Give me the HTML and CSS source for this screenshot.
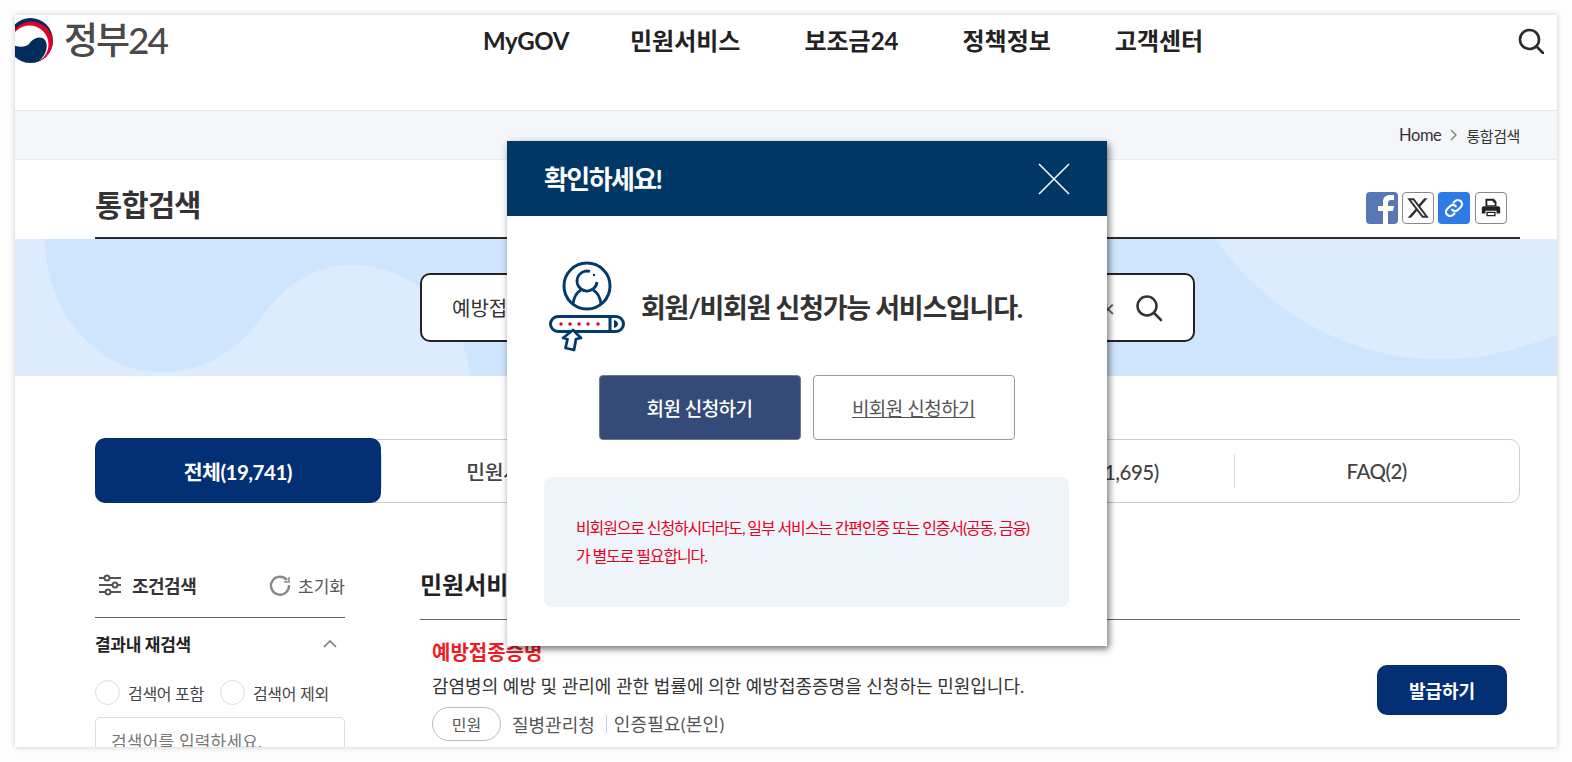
FILE: index.html
```html
<!DOCTYPE html>
<html lang="ko">
<head>
    <meta charset="UTF-8">
    <meta name="viewport" content="width=device-width, initial-scale=1.0">
    <title>정부24 - 통합검색</title>
    <link rel="stylesheet" href="styles.css">
</head>
<body>
    <div class="page">
        <header class="top">
            <a href="#" class="logo">
                <svg class="logo-mark" viewBox="15 18 41 46" width="41" height="46">
                    <defs>
                        <clipPath id="taegeuk"><circle cx="30.5" cy="40.5" r="22.5"/></clipPath>
                    </defs>
                    <g clip-path="url(#taegeuk)">
                        <rect x="8" y="18" width="46" height="46" fill="#002d5b"/>
                        <circle cx="31.5" cy="43" r="21.5" fill="#e2002d"/>
                        <circle cx="29.5" cy="44.5" r="19" fill="#fff"/>
                        <path d="M8 42C16 48 25 48 29 44C33 38 41 35 45 40C49 46 46 56 37 63L30 65L8 65Z" fill="#002d5b"/>
                    </g>
                </svg>
                <span class="logo-text">정부24</span>
            </a>
            <nav class="gnb">
                <a href="#">MyGOV</a>
                <a href="#">민원서비스</a>
                <a href="#">보조금24</a>
                <a href="#">정책정보</a>
                <a href="#">고객센터</a>
            </nav>
            <svg class="top-search" viewBox="0 0 26 26" width="26" height="26" fill="none" stroke="#2b2b2b" stroke-width="2.6">
                <circle cx="11.5" cy="11.5" r="9.5"/>
                <path d="M18.5 18.5L25 25" stroke-linecap="round"/>
            </svg>
        </header>

        <div class="crumb">
            <span class="crumb-home">Home</span>
            <svg viewBox="0 0 7 12" width="7" height="12" fill="none" stroke="#777" stroke-width="1.3"><path d="M1 1l5 5-5 5"/></svg>
            <span>통합검색</span>
        </div>

        <div class="inner title-row">
            <h1>통합검색</h1>
            <div class="share">
                <a href="#" class="share-btn share-fb">
                    <svg viewBox="0 0 32 32" width="32" height="32"><path d="M17 32V19h-5v-5h5v-4c0-5 3-7 7-7h4v5h-3c-2 0-3 1-3 3v3h6l-1 5h-5v13z" fill="#fff"/></svg>
                </a>
                <a href="#" class="share-btn share-line">
                    <svg viewBox="0 0 24 24" width="24" height="24"><path d="M18.244 2.25h3.308l-7.227 8.26 8.502 11.24H16.17l-5.214-6.817L4.99 21.75H1.68l7.73-8.835L1.254 2.25H8.08l4.713 6.231zm-1.161 17.52h1.833L7.084 4.126H5.117z" fill="#333"/></svg>
                </a>
                <a href="#" class="share-btn share-link">
                    <svg viewBox="0 0 24 24" width="22" height="22" fill="none" stroke="#fff" stroke-width="2.4" stroke-linecap="round">
                        <path d="M10 14a4.5 4.5 0 0 0 6.4 0l3-3A4.5 4.5 0 0 0 13 4.600l-1.500 1.500"/>
                        <path d="M14 10a4.500 4.500 0 0 0-6.400 0l-3 3A4.500 4.500 0 0 0 11 19.400l1.500-1.500"/>
                    </svg>
                </a>
                <a href="#" class="share-btn share-line share-print">
                    <svg viewBox="0 0 24 24" width="22" height="22"><path d="M6 2h9l3 3v5H6zM8 4v5h8V6h-2V4z" fill="#222"/><path d="M4 10h16a2 2 0 0 1 2 2v6h-4v-3H6v3H2v-6a2 2 0 0 1 2-2z" fill="#222"/><path d="M7 16h10v5H7z" fill="#222"/><path d="M8.500 17.500h7v2h-7z" fill="#fff"/></svg>
                </a>
            </div>
        </div>

        <section class="search-band">
            <svg class="band-bg" viewBox="0 0 1542 137" preserveAspectRatio="none">
                <path d="M30 0C30 70 80 133 145 133C190 133 225 110 245 80C270 45 300 26 335 26C400 26 450 75 455 137L1542 137L1542 96C1490 115 1460 120 1425 120C1330 120 1250 70 1200 0Z" fill="#cfe5fd"/>
            </svg>
            <div class="search-box">
                <span class="search-word">예방접종증명</span>
                <span class="search-clear">×</span>
                <svg viewBox="0 0 28 28" width="28" height="28" fill="none" stroke="#333" stroke-width="2.500">
                    <circle cx="12" cy="12" r="9.500"/>
                    <path d="M19 19l7 7" stroke-linecap="round"/>
                </svg>
            </div>
        </section>

        <div class="inner">
            <div class="tabs">
                <a href="#" class="tab active">전체(19,741)</a>
                <a href="#" class="tab">민원서비스(5)</a>
                <a href="#" class="tab">보조금(18,008)</a>
                <a href="#" class="tab">정책정보(1,695)</a>
                <a href="#" class="tab">FAQ(2)</a>
            </div>

            <div class="result-wrap">
                <aside class="filter">
                    <div class="filter-head">
                        <div class="filter-title">
                            <svg viewBox="0 0 24 22" width="24" height="22" fill="none" stroke="#555" stroke-width="2">
                                <path d="M1 4h22M1 11h22M1 18h22"/>
                                <circle cx="9" cy="4" r="2.500" fill="#fff"/>
                                <circle cx="17" cy="11" r="2.500" fill="#fff"/>
                                <circle cx="10" cy="18" r="2.500" fill="#fff"/>
                            </svg>
                            <strong>조건검색</strong>
                        </div>
                        <a href="#" class="reset">
                            <svg viewBox="0 0 22 22" width="22" height="22" fill="none" stroke="#888" stroke-width="2.400">
                                <path d="M18 6A9 9 0 1 0 20 11"/>
                                <path d="M20 3v5h-5" stroke-width="1.500"/>
                            </svg>
                            초기화
                        </a>
                    </div>
                    <div class="filter-sub">
                        <strong>결과내 재검색</strong>
                        <svg viewBox="0 0 14 8" width="14" height="8" fill="none" stroke="#777" stroke-width="1.500"><path d="M1 7l6-6 6 6"/></svg>
                    </div>
                    <div class="radios">
                        <label class="radio"><i></i>검색어 포함</label>
                        <label class="radio"><i></i>검색어 제외</label>
                    </div>
                    <div class="filter-input">검색어를 입력하세요.</div>
                </aside>

                <main class="results">
                    <h2>민원서비스</h2>
                    <div class="result-item">
                        <div class="result-text">
                            <a href="#" class="result-name">예방접종증명</a>
                            <p>감염병의 예방 및 관리에 관한 법률에 의한 예방접종증명을 신청하는 민원입니다.</p>
                            <div class="result-meta">
                                <span class="pill">민원</span>
                                <span>질병관리청</span>
                                <span class="meta-sep">인증필요(본인)</span>
                            </div>
                        </div>
                        <a href="#" class="btn-issue">발급하기</a>
                    </div>
                </main>
            </div>
        </div>

        <div class="modal">
            <div class="modal-head">
                <strong>확인하세요!</strong>
                <svg viewBox="0 0 32 32" width="32" height="32" fill="none" stroke="#fff" stroke-width="1.500"><path d="M1 1l30 30M31 1L1 31"/></svg>
            </div>
            <div class="modal-body">
                <div class="modal-msg">
                    <svg class="modal-icon" viewBox="546 258 82 94" width="82" height="94" fill="none" stroke="#033a6b" stroke-width="3">
                        <circle cx="587" cy="284" r="23"/>
                        <path d="M590 269.500A10 10 0 1 0 597 280" stroke-width="2.800"/>
                        <circle cx="594" cy="273" r="1.200" fill="#033a6b" stroke="none"/>
                        <path d="M573 302C574 295 577 290 581 288M593 288C597 290 600 295 601 302" stroke-width="2.800"/>
                        <rect x="550.500" y="314.500" width="73" height="15" rx="7.500" fill="#fff"/>
                        <path d="M610 314v15"/>
                        <path d="M614 318c3 1 4 2.500 4 4s-1 3-4 4z" fill="#033a6b" stroke="none"/>
                        <g fill="#e2002d" stroke="none">
                            <circle cx="561" cy="322" r="1.700"/>
                            <circle cx="570" cy="322" r="1.700"/>
                            <circle cx="579" cy="322" r="1.700"/>
                            <circle cx="588" cy="322" r="1.700"/>
                            <circle cx="598" cy="322" r="1.700"/>
                        </g>
                        <path d="M573 328L581 336L576 337L574 348L565.500 346L567.500 337L563 336Z" fill="#fff" stroke-width="2.800" stroke-linejoin="round"/>
                    </svg>
                    <p>회원/비회원 신청가능 서비스입니다.</p>
                </div>
                <div class="modal-btns">
                    <a href="#" class="btn btn-primary">회원 신청하기</a>
                    <a href="#" class="btn btn-outline">비회원 신청하기</a>
                </div>
                <div class="notice">
                    비회원으로 신청하시더라도, 일부 서비스는 간편인증 또는 인증서(공동, 금융)<br>가 별도로 필요합니다.
                </div>
            </div>
        </div>
    </div>
</body>
</html>
```

FILE: styles.css
```css
* {
    box-sizing: border-box;
}

body {
    font-family: Lato, "Noto Sans CJK KR", sans-serif;
    background-color: #fdfdfd;
    color: #333;
    margin: 0;
    padding: 15px;
    height: 762px;
    overflow: hidden;
}

a {
    color: inherit;
    text-decoration: none;
}

.page {
    position: relative;
    height: 732px;
    background-color: #fff;
    overflow: hidden;
    box-shadow: 0 0 6px rgba(0, 0, 0, 0.2);
}

.inner {
    margin: 0 37px 0 80px;
}

/* header */
.top {
    position: relative;
    height: 96px;
    border-bottom: 1px solid #e3e6ea;
}

.logo {
    position: absolute;
    left: 0;
    top: 3px;
    display: flex;
    align-items: flex-start;
}

.logo-text {
    font-size: 37px;
    line-height: 44px;
    font-weight: 500;
    letter-spacing: -2px;
    color: #4a4a4a;
    margin-left: 8px;
}

.gnb {
    display: flex;
    gap: 64px;
    padding: 8px 0 0 468px;
    font-size: 24px;
    line-height: 36px;
    font-weight: 700;
    color: #222;
}

.gnb a:first-child {
    letter-spacing: -0.4px;
    margin-right: -3px;
}

.top-search {
    position: absolute;
    right: 13px;
    top: 13px;
}

.crumb {
    height: 49px;
    background-color: #f4f6fa;
    border-bottom: 1px solid #e8eaee;
    display: flex;
    align-items: center;
    justify-content: flex-end;
    gap: 9px;
    padding-right: 37px;
    font-size: 15px;
    letter-spacing: -0.4px;
}

.crumb-home {
    font-size: 16.5px;
}

/* title */
.title-row {
    height: 79px;
    border-bottom: 2px solid #2b2b2b;
    display: flex;
    justify-content: space-between;
    align-items: center;
    padding: 9px 13px 0 0;
}

h1 {
    margin: 0;
    font-size: 29.5px;
    font-weight: 700;
    letter-spacing: -0.7px;
    color: #333;
}

.share {
    display: flex;
    gap: 4px;
    margin-top: 10px;
}

.share-btn {
    width: 32px;
    height: 32px;
    border-radius: 4px;
    display: flex;
    align-items: center;
    justify-content: center;
    overflow: hidden;
}

.share-fb {
    background-color: #5877b4;
}

.share-link {
    background-color: #2f7be5;
}

.share-line {
    border: 1px solid #888;
    background-color: #fff;
}

.share-print {
    margin-left: 1px;
}

/* search */
.search-band {
    position: relative;
    height: 137px;
    background-color: #dcebfe;
    padding: 34px 362px 0 405px;
}

.band-bg {
    position: absolute;
    left: 0;
    top: 0;
    width: 100%;
    height: 100%;
}

.search-box {
    position: relative;
    height: 69px;
    background-color: #fff;
    border: 2px solid #222;
    border-radius: 10px;
    display: flex;
    align-items: center;
    padding: 0 30px 0 30px;
}

.search-word {
    flex: 1;
    font-size: 20px;
}

.search-clear {
    font-size: 24px;
    color: #555;
    margin-right: 20px;
}

/* tabs */
.tabs {
    display: grid;
    grid-template-columns: repeat(5, 1fr);
    height: 64px;
    margin-top: 63px;
    border: 1px solid #ccc;
    border-radius: 10px;
}

.tab {
    position: relative;
    display: flex;
    align-items: center;
    justify-content: center;
    font-size: 20.5px;
    font-weight: 500;
    letter-spacing: -0.5px;
    color: #444;
}

.tab + .tab::before {
    content: "";
    position: absolute;
    left: 0;
    top: 14px;
    bottom: 14px;
    border-left: 1px solid #ddd;
}

.tab.active {
    margin: -2px 0 -1px -1px;
    background-color: #033074;
    border-radius: 10px;
    color: #fff;
    font-weight: 700;
}

/* results */
.result-wrap {
    display: flex;
    gap: 75px;
    margin-top: 50px;
}

.filter {
    width: 250px;
    flex-shrink: 0;
}

.filter-head {
    height: 65px;
    border-bottom: 1px solid #666;
    display: flex;
    align-items: center;
    justify-content: space-between;
}

.filter-title {
    display: flex;
    align-items: center;
    gap: 10px;
    padding-left: 3px;
    font-size: 18px;
    letter-spacing: -0.5px;
}

.reset {
    display: flex;
    align-items: center;
    gap: 7px;
    font-size: 17px;
    color: #555;
}

.filter-sub {
    display: flex;
    align-items: center;
    justify-content: space-between;
    padding: 13px 8px 0 0;
    font-size: 17px;
    letter-spacing: -0.3px;
    color: #222;
}

.radios {
    display: flex;
    gap: 16px;
    margin-top: 24px;
}

.radio {
    display: flex;
    align-items: center;
    gap: 8px;
    font-size: 16px;
    letter-spacing: -0.3px;
    color: #444;
}

.radio i {
    width: 25px;
    height: 25px;
    border: 1px solid #ddd;
    border-radius: 50%;
    background-color: #fff;
}

.filter-input {
    margin-top: 12px;
    height: 48px;
    border: 1px solid #ddd;
    border-radius: 5px;
    padding: 10px 15px;
    font-size: 17px;
    color: #777;
    letter-spacing: 0.2px;
    white-space: nowrap;
}

.results {
    flex: 1;
}

h2 {
    margin: 0;
    height: 67px;
    padding-top: 13px;
    border-bottom: 1px solid #666;
    font-size: 24px;
    font-weight: 700;
    color: #222;
}

.result-item {
    display: flex;
    align-items: center;
    justify-content: space-between;
    padding: 19px 13px 0 12px;
}

.result-name {
    display: block;
    font-size: 20px;
    line-height: 26px;
    font-weight: 700;
    color: #ee1c25;
}

.result-text p {
    margin: 9px 0 0;
    font-size: 18px;
    line-height: 24px;
    color: #333;
}

.result-meta {
    display: flex;
    align-items: center;
    margin-top: 9px;
    font-size: 18px;
    color: #555;
}

.pill {
    width: 69px;
    height: 34px;
    border: 1px solid #bbb;
    border-radius: 17px;
    display: flex;
    align-items: center;
    justify-content: center;
    font-size: 16px;
    margin-right: 11px;
}

.meta-sep {
    margin-left: 11px;
    padding-left: 7px;
    border-left: 1px solid #ccc;
    line-height: 18px;
    letter-spacing: 0.2px;
}

.btn-issue {
    width: 130px;
    height: 50px;
    background-color: #033074;
    border-radius: 10px;
    color: #fff;
    font-size: 18px;
    font-weight: 700;
    display: flex;
    align-items: center;
    justify-content: center;
}

/* modal */
.modal {
    position: absolute;
    left: 492px;
    top: 126px;
    width: 600px;
    height: 505px;
    background-color: #fff;
    box-shadow: 2px 3px 7px rgba(0, 0, 0, 0.55);
}

.modal-head {
    height: 75px;
    background-color: #003764;
    color: #fff;
    display: flex;
    align-items: center;
    justify-content: space-between;
    padding: 0 37px 2px;
    font-size: 26px;
    letter-spacing: -1.6px;
}

.modal-head svg {
    margin-top: 2px;
}

.modal-body {
    padding: 0 38px 0 37px;
}

.modal-msg {
    display: flex;
    align-items: center;
    gap: 13px;
    padding-top: 22px;
    height: 159px;
}

.modal-icon {
    flex-shrink: 0;
    margin-left: 2px;
}

.modal-msg p {
    margin: 0 0 1px;
    font-size: 27px;
    font-weight: 700;
    letter-spacing: -1.25px;
    color: #333;
    white-space: nowrap;
}

.modal-btns {
    display: flex;
    justify-content: center;
    gap: 12px;
}

.btn {
    width: 202px;
    height: 65px;
    border-radius: 4px;
    display: flex;
    align-items: center;
    justify-content: center;
    font-size: 19px;
    letter-spacing: -0.5px;
}

.btn-primary {
    background-color: #344a78;
    border: 1px solid #777;
    color: #fff;
    font-weight: 500;
}

.btn-outline {
    border: 1px solid #999;
    color: #555;
    text-decoration: underline;
}

.notice {
    margin-top: 37px;
    height: 130px;
    background-color: #eff4f8;
    border-radius: 8px;
    padding: 37px 32px 0;
    font-size: 16px;
    line-height: 28px;
    letter-spacing: -1.14px;
    color: #e60023;
    white-space: nowrap;
}
```
